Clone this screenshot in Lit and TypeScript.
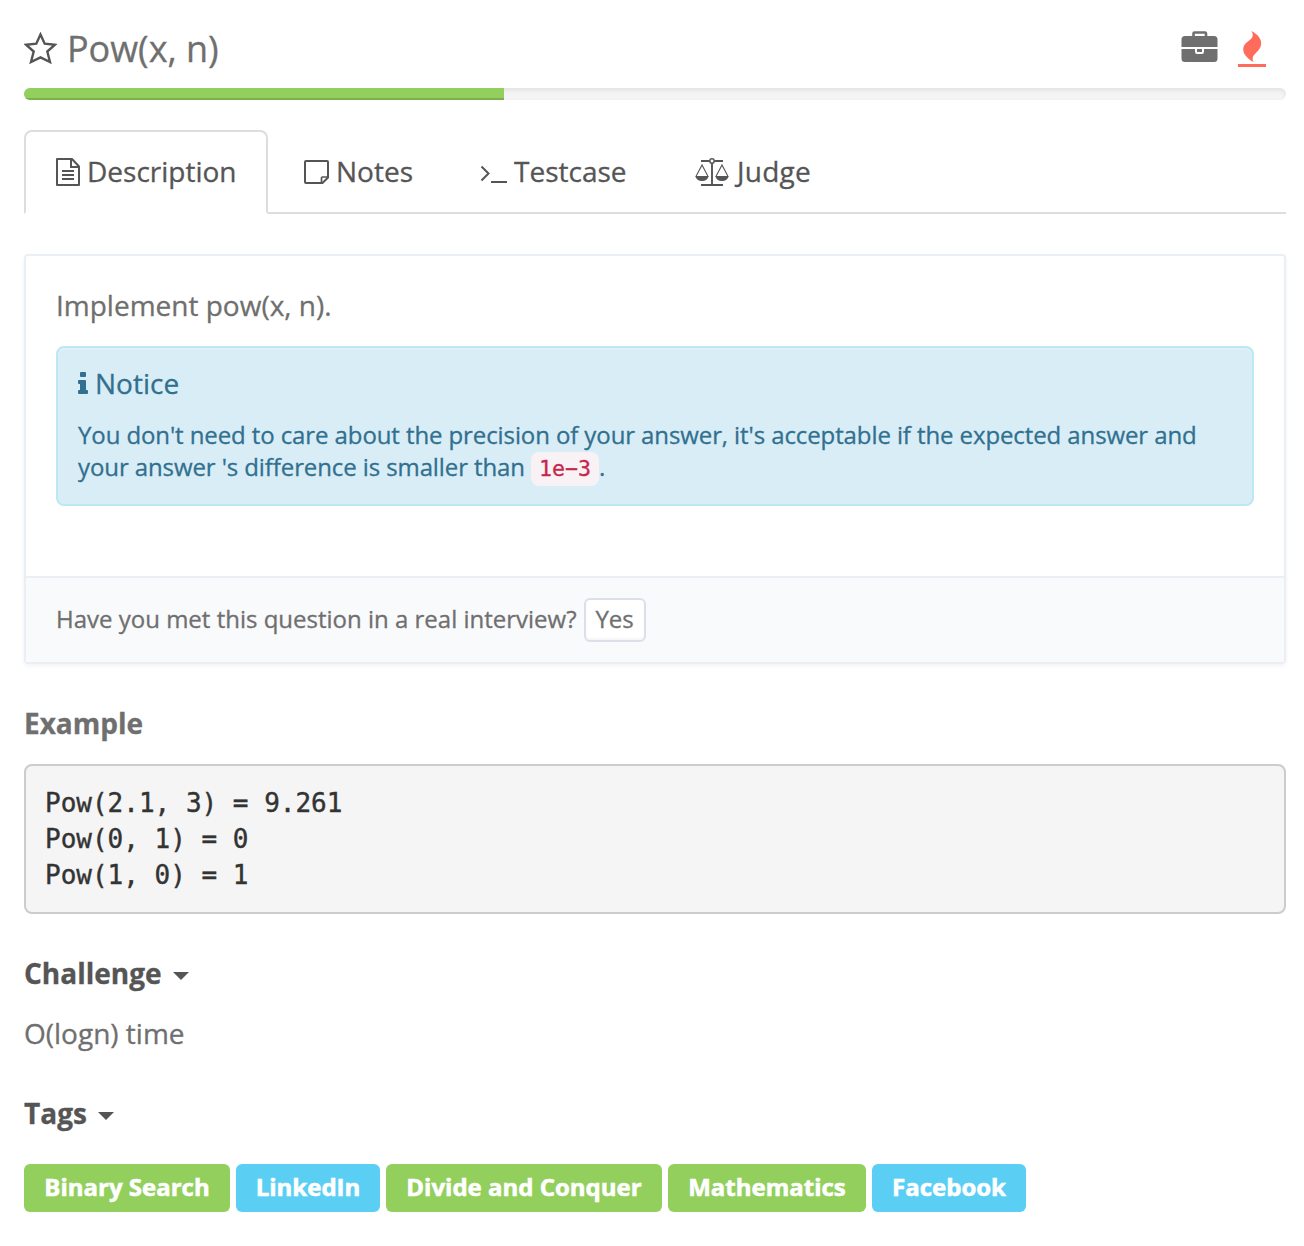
import { LitElement, html, css, svg } from "lit";
import { customElement } from "lit/decorators.js";
import { classMap } from "lit/directives/class-map.js";

const fileIcon = svg`<svg class="ico" width="24" height="28" viewBox="0 0 24 28" fill="none" stroke="#555" stroke-width="2">
  <path d="M1 1H16L23 8.500V27H1Z" stroke-linejoin="round"/><path d="M15 1V9H23"/><path d="M6 13H18M6 17H18M6 21H18"/></svg>`;
const noteIcon = svg`<svg class="ico" width="25" height="24" viewBox="0 0 25 24" fill="none" stroke="#555" stroke-width="2">
  <path d="M1 2Q1 1 2 1H23Q24 1 24 2V17.500L18.500 23H2Q1 23 1 22Z"/><path d="M17.500 23V18Q17.500 17 18.500 17H24" stroke-width="1.700"/></svg>`;
const termIcon = svg`<svg class="ico" width="27" height="18" viewBox="0 0 27 18" fill="none" stroke="#555" stroke-width="2">
  <path d="M1.500 1.500L8.500 8.500L1.500 15.500M11 17H27"/></svg>`;
const scaleIcon = svg`<svg class="ico" width="34" height="28" viewBox="0 0 34 28" fill="none" stroke="#555" stroke-width="1.500">
  <path d="M6 3H14.500M19.500 3H28M17 5.500V26.500M6 27H28" stroke-width="1.900"/><circle cx="17" cy="3" r="2.200"/>
  <path d="M1.200 18L7 7L12.800 18M21.200 18L27 7L32.800 18" stroke-width="1.100"/>
  <path d="M.2 18H13.800Q12.500 23 7 23T.2 18ZM20.200 18H33.800Q32.500 23 27 23T20.200 18Z" fill="#555" stroke="none"/></svg>`;

const tabs = [
  { label: "Description", icon: fileIcon, cls: "t1" },
  { label: "Notes", icon: noteIcon, cls: "t2" },
  { label: "Testcase", icon: termIcon, cls: "t3" },
  { label: "Judge", icon: scaleIcon, cls: "t4" },
];
const tags = [
  { label: "Binary Search", company: false, width: 206 },
  { label: "LinkedIn", company: true, width: 144 },
  { label: "Divide and Conquer", company: false, width: 276 },
  { label: "Mathematics", company: false, width: 198 },
  { label: "Facebook", company: true, width: 154 },
];

@customElement("app-root")
export class AppRoot extends LitElement {
  static styles = css`
    :host { display: block; box-sizing: border-box; height: 1246px; padding: 20px 18px 0 24px; background: #fff;
      font-family: "Open Sans", sans-serif; font-size: 28px; line-height: 38px; color: #6f6f6f; overflow: hidden;
      -webkit-text-stroke: .3px currentColor; }
    * { box-sizing: border-box; }
    svg { display: block; flex: none; }
    .head { display: flex; height: 68px; padding-right: 20px; }
    .star { margin: 12px 10px 0 0; }
    .title { flex: 1; margin: 0; font-size: 36px; font-weight: 400; line-height: 58px; letter-spacing: -.05px; }
    .case { margin: 11px 20px 0 0; }
    .fire { margin-top: 11px; }
    .progress { height: 12px; border-radius: 6px; background: #f4f4f4; box-shadow: inset 0 2px 4px rgba(0,0,0,.08); overflow: hidden; }
    .bar { width: 480px; height: 12px; background: #92cf5c; box-shadow: inset 0 -2px 0 rgba(0,0,0,.15); }
    .tabs { display: flex; height: 84px; margin-top: 30px; color: #555; }
    .tab { display: flex; border-bottom: 2px solid #ddd; padding-top: 22px; white-space: nowrap; }
    .tab.active { border: 2px solid #ddd; border-bottom-color: transparent; border-radius: 8px 8px 0 0; padding-top: 20px; }
    .t1 { width: 244px; padding-left: 30px; }
    .t2 { width: 176px; padding-left: 36px; }
    .t3 { width: 214px; padding-left: 36px; }
    .t4 { flex: 1; padding-left: 37px; }
    .t1 .ico { margin: 6px 7px 0 0; } .t2 .ico { margin: 8px 7px 0 0; }
    .t3 .ico { margin: 13px 7px 0 0; } .t4 .ico { margin: 6px 8px 0 0; }
    .t4 span { letter-spacing: .25px; }
    .panel { height: 410px; margin-top: 40px; border: 2px solid #e9eff5; border-radius: 4px; box-shadow: 0 2px 4px rgba(0,0,0,.05); }
    .body { height: 320px; padding: 30px 30px 0; }
    .body p { margin: 0 0 22px; }
    .notice { height: 160px; padding: 16px 20px; border: 2px solid #bce8f1; border-radius: 8px; background: #d9edf7; color: #31708f; box-shadow: inset 0 2px 0 rgba(255,255,255,.2); }
    .notice h4 { display: flex; margin: 0; font-size: 28px; font-weight: 400; line-height: 38px; }
    .info { margin: 8px 7px 0 0; }
    .msg { margin-top: 17px; font-size: 24px; line-height: 32px; letter-spacing: -.1px; white-space: nowrap; }
    code { display: inline-block; height: 34px; margin: 1px 0 -3px; padding: 0 8px; border-radius: 8px; background: #f9f2f4; color: #c7254e; font: 21.600px/33px "DejaVu Sans Mono", monospace; letter-spacing: 0; vertical-align: top; }
    .foot { display: flex; height: 86px; padding: 20px 30px; border-top: 2px solid #e9eff5; background: #f9fafc; font-size: 24px; line-height: 42px; }
    .yes { width: 62px; height: 44px; margin-left: 7px; padding: 0 0 2px; border: 2px solid #dedee8; border-radius: 6px; background: #fff; box-shadow: inset 0 -2px 2px rgba(0,0,0,.04); color: inherit; font: 24px/38px "Open Sans", sans-serif; text-align: center; -webkit-text-stroke: inherit; }
    h3 { display: flex; align-items: center; gap: 11px; margin: 40px 0 0; padding-bottom: 2px; font-size: 28px; font-weight: 700; line-height: 38px; }
    .dark { color: #555; }
    .caret { width: 0; height: 0; margin-top: 6px; border: 8px solid transparent; border-top-color: #555; border-bottom: 0; }
    pre { height: 150px; margin: 20px 0 0; padding: 19px 19px; border: 2px solid #ccc; border-radius: 8px; background: #f5f5f5; color: #333; font: 26px/36px "DejaVu Sans Mono", monospace; -webkit-text-stroke-width: .4px; }
    .time { margin: 20px 0 0; padding-bottom: 2px; }
    .tags { display: flex; gap: 6px; margin-top: 30px; }
    .tag { height: 48px; border-radius: 6px; background: #92cf5c; color: #fff; font-size: 24px; font-weight: 700; line-height: 46px; text-align: center; white-space: nowrap; -webkit-text-stroke-width: .6px; }
    .tag.company { background: #5bcff3; }
  `;

  render() {
    return html`
      <header class="head">
        <svg class="star" width="33" height="32" viewBox="0 0 33 32" fill="none" stroke="#555" stroke-width="2.400"><path d="M16.500 2.500L20.700 11.700L31 12.700L23.300 19.500L26 30L16.500 25.300L7 30L9.700 19.500L2 12.700L12.300 11.700Z"/></svg>
        <h1 class="title">Pow(x, n)</h1>
        <svg class="case" width="37" height="32" viewBox="0 0 37 32" fill="#6f6f6f"><path d="M12.500 6V2.500Q12.500 1.500 13.500 1.500H24Q25 1.500 25 2.500V6" fill="none" stroke="#6f6f6f" stroke-width="2.600"/><path d="M4 5H33Q36.500 5 36.500 8.500V16H.5V8.500Q.5 5 4 5ZM.5 18H14V20.500Q14 23 16 23H21Q23 23 23 20.500V18H36.500V27.500Q36.500 31 33 31H4Q.5 31 .5 27.500Z"/><path d="M16 18H21V21H16Z"/></svg>
        <svg class="fire" width="28" height="37" viewBox="0 0 28 37" fill="#ff6c5c"><path d="M13.500 0C21 4 24 9 23 14C22 19 18.500 21 16 24Q13.500 27 15.500 31C8 27 4 21 5.500 16C7 11 13 9.500 14.500 5.500Q15.500 3 13.500 0Z"/><path d="M0 33H28V36H0Z"/></svg>
      </header>
      <div class="progress"><div class="bar"></div></div>
      <nav class="tabs">${tabs.map((t, i) => html`<div class="tab ${t.cls} ${i === 0 ? "active" : ""}">${t.icon}<span>${t.label}</span></div>`)}</nav>
      <section class="panel">
        <div class="body">
          <p>Implement pow(x, n).</p>
          <div class="notice">
            <h4><svg class="info" width="10" height="22" viewBox="0 0 10 22" fill="#31708f"><path d="M2 1Q2 0 3 0H7Q8 0 8 1V4Q8 5 7 5H3Q2 5 2 4ZM1 8H7Q8 8 8 9V18H9Q10 18 10 19V21Q10 22 9 22H1Q0 22 0 21V19Q0 18 1 18H2V12H1Q0 12 0 11V9Q0 8 1 8Z"/></svg>Notice</h4>
            <div class="msg">You don't need to care about the precision of your answer, it's acceptable if the expected answer and<br>your answer 's difference is smaller than <code>1e−3</code>.</div>
          </div>
        </div>
        <div class="foot"><span>Have you met this question in a real interview?</span><button class="yes">Yes</button></div>
      </section>
      <h3>Example</h3>
      <pre>Pow(2.1, 3) = 9.261
Pow(0, 1) = 0
Pow(1, 0) = 1</pre>
      <h3 class="dark">Challenge<span class="caret"></span></h3>
      <p class="time">O(logn) time</p>
      <h3 class="dark">Tags<span class="caret"></span></h3>
      <div class="tags">${tags.map((t) => html`<span class=${classMap({ tag: true, company: t.company })} style="width:${t.width}px">${t.label}</span>`)}</div>
    `;
  }
}
